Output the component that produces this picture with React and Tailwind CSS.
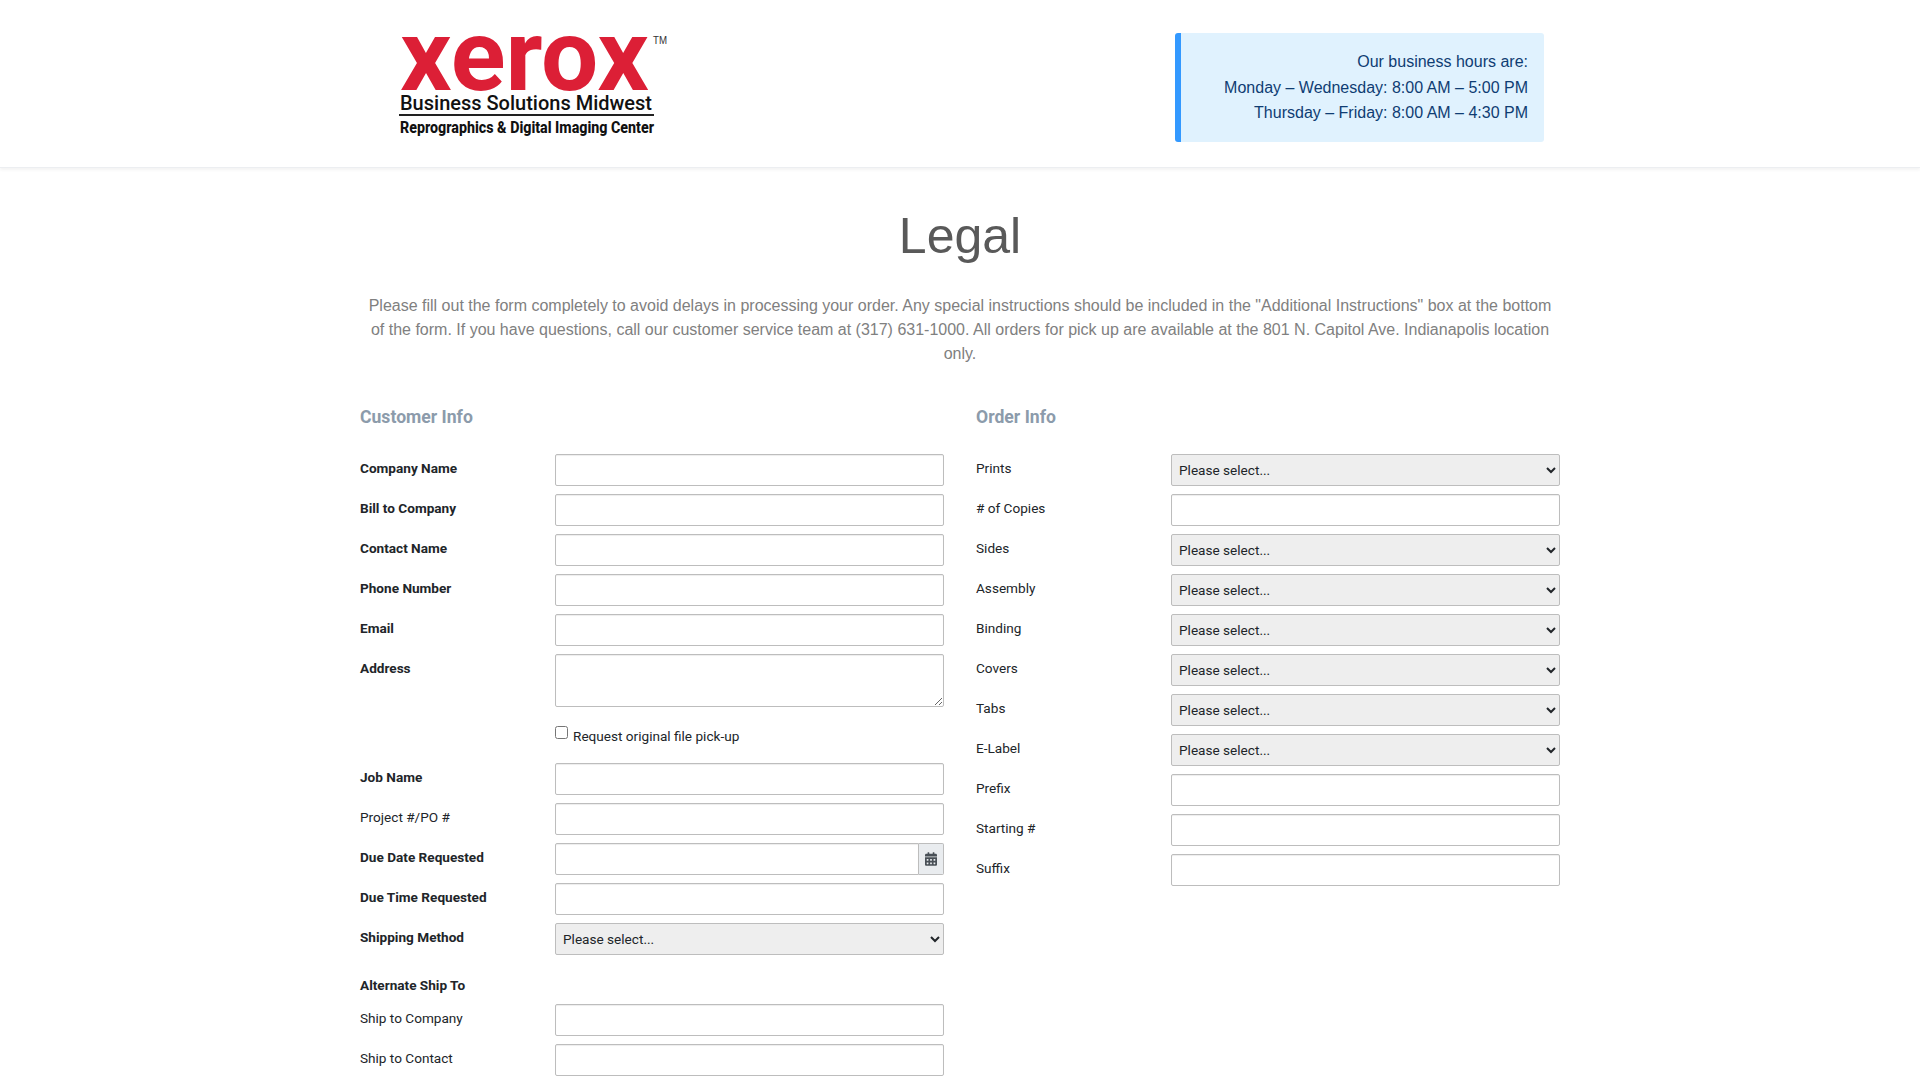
import React from 'react';
import { FaCalendarAlt } from 'react-icons/fa';

const fieldClass = 'w-full h-8 bg-white border border-[#bdbdbd] rounded-[2px] shadow-[inset_0_1px_1px_rgba(0,0,0,0.075)]';
const selectClass = 'w-full h-8 pl-[3px] bg-[#eeeeee] border border-[#bdbdbd] rounded-[2px] text-[13.6px] text-[#212529] font-["Roboto",sans-serif]';

const customerTop = [
  { label: 'Company Name', bold: true },
  { label: 'Bill to Company', bold: true },
  { label: 'Contact Name', bold: true },
  { label: 'Phone Number', bold: true },
  { label: 'Email', bold: true },
  { label: 'Address', bold: true, type: 'textarea' }
];

const customerMiddle = [
  { label: 'Job Name', bold: true },
  { label: 'Project #/PO #' },
  { label: 'Due Date Requested', bold: true, type: 'date' },
  { label: 'Due Time Requested', bold: true },
  { label: 'Shipping Method', bold: true, type: 'select' }
];

const customerBottom = [
  { label: 'Ship to Company' },
  { label: 'Ship to Contact' }
];

const orderFields = [
  { label: 'Prints', type: 'select' },
  { label: '# of Copies' },
  { label: 'Sides', type: 'select' },
  { label: 'Assembly', type: 'select' },
  { label: 'Binding', type: 'select' },
  { label: 'Covers', type: 'select' },
  { label: 'Tabs', type: 'select' },
  { label: 'E-Label', type: 'select' },
  { label: 'Prefix' },
  { label: 'Starting #' },
  { label: 'Suffix' }
];

function Logo() {
  return (
    <svg width="270" height="104" viewBox="0 0 270 104" className="block overflow-visible">
      <text x="0" y="57" fontFamily="Roboto, sans-serif" fontWeight="700" fontSize="100" fill="#dc1f36" textLength="249" lengthAdjust="spacingAndGlyphs">xerox</text>
      <text x="253" y="11" fontFamily="Liberation Sans, sans-serif" fontSize="10" fill="#333" textLength="14" lengthAdjust="spacingAndGlyphs">TM</text>
      <text x="0" y="76.5" fontFamily="Roboto, sans-serif" fontWeight="500" fontSize="21" fill="#111" textLength="252" lengthAdjust="spacingAndGlyphs">Business Solutions Midwest</text>
      <rect x="-1" y="81" width="255" height="2" fill="#222" />
      <text x="0" y="100" fontFamily="Roboto, sans-serif" fontWeight="800" fontSize="16" fill="#111" textLength="254" lengthAdjust="spacingAndGlyphs">Reprographics &amp; Digital Imaging Center</text>
    </svg>
  );
}

function Field({ label, bold, type }) {
  return (
    <div className="flex items-start mb-2">
      <label className={`w-[195px] shrink-0 pt-1 text-[13.6px] leading-5 text-[#212529] ${bold ? 'font-bold' : ''}`}>{label}</label>
      <div className="flex-1">
        {type === 'select' && (
          <select className={selectClass}>
            <option>Please select...</option>
          </select>
        )}
        {type === 'textarea' && <textarea className={`${fieldClass} !h-[53px] block`} />}
        {type === 'date' && (
          <div className="flex">
            <input className={`${fieldClass} rounded-r-none`} />
            <span className="w-[25px] h-8 shrink-0 flex items-center justify-center bg-[#e9ecef] border border-l-0 border-[#bdbdbd] rounded-r-[2px]">
              <FaCalendarAlt className="h-[14px] w-[12px] text-[#495057]" />
            </span>
          </div>
        )}
        {!type && <input className={fieldClass} />}
      </div>
    </div>
  );
}

export default function App() {
  return (
    <div className="h-screen overflow-hidden bg-white font-['Roboto',sans-serif]">
      <header className="h-[168px] border-b border-[#eceef1] shadow-[0_2px_3px_rgba(0,0,0,0.05)]">
        <div className="w-[1200px] mx-auto flex items-start pt-[33px] pl-[40px] pr-4">
          <Logo />
          <div className="ml-auto w-[369px] h-[109px] pr-4 pt-[16px] bg-[#e0f2fe] border-l-[6px] border-[#3399ff] rounded-[3px] text-right text-base leading-[25.6px] text-[#0f3d73] font-['Liberation_Sans',sans-serif]">
            <p>Our business hours are:</p>
            <p>Monday – Wednesday: 8:00 AM – 5:00 PM</p>
            <p>Thursday – Friday: 8:00 AM – 4:30 PM</p>
          </div>
        </div>
      </header>

      <main className="w-[1200px] mx-auto">
        <h1 className="pt-[38px] mb-7 text-center text-[50px] leading-[60px] text-[#595959] font-['Liberation_Sans',sans-serif]">Legal</h1>
        <p className="text-center text-base leading-6 text-[#808080] font-['Liberation_Sans',sans-serif]">
          Please fill out the form completely to avoid delays in processing your order. Any special instructions should be included in the "Additional Instructions" box at the bottom of the form. If you have questions, call our customer service team at (317) 631-1000. All orders for pick up are available at the 801 N. Capitol Ave. Indianapolis location only.
        </p>

        <form className="grid grid-cols-2 gap-x-8 mt-[39px]">
          <section>
            <h2 className="mb-[25px] text-[17.6px] leading-6 font-bold text-[#8c9bab]">Customer Info</h2>
            {customerTop.map((f) => <Field key={f.label} {...f} />)}
            <div className="h-[48px] pl-[195px] pt-[3px] flex items-start">
              <input type="checkbox" className="mt-[8px] ml-0 mr-[5px]" />
              <span className="pt-2 text-[13.6px] leading-5 text-[#212529]">Request original file pick-up</span>
            </div>
            {customerMiddle.map((f) => <Field key={f.label} {...f} />)}
            <p className="pt-[12px] pb-[9px] text-[13.6px] leading-5 font-bold text-[#212529]">Alternate Ship To</p>
            {customerBottom.map((f) => <Field key={f.label} {...f} />)}
          </section>
          <section>
            <h2 className="mb-[25px] text-[17.6px] leading-6 font-bold text-[#8c9bab]">Order Info</h2>
            {orderFields.map((f) => <Field key={f.label} {...f} />)}
          </section>
        </form>
      </main>
    </div>
  );
}
